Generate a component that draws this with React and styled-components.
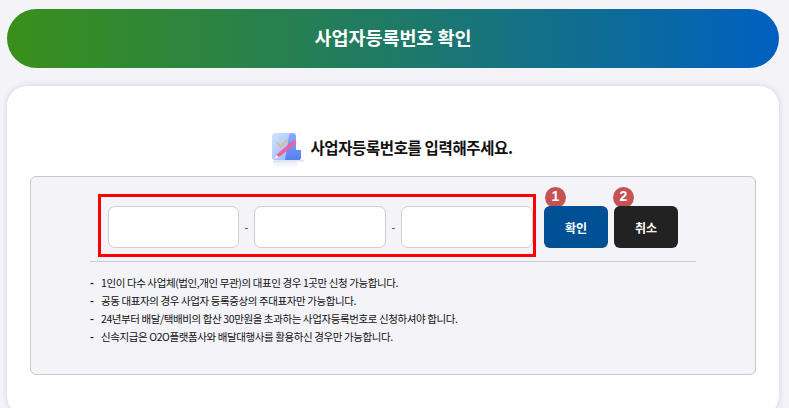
import styled, { createGlobalStyle } from "styled-components";

const GlobalStyle = createGlobalStyle`
  html, body {
    margin: 0;
    height: 100%;
    overflow: hidden;
    background: #f3f3f8;
  }
  * {
    box-sizing: border-box;
  }
`;

const Page = styled.div`
  width: 789px;
  height: 408px;
  overflow: hidden;
  padding: 9px 10px 0 7px;
  font-family: "Noto Sans CJK KR", "Noto Sans", sans-serif;
`;

const Header = styled.h1`
  margin: 0 0 18px;
  height: 59px;
  border-radius: 30px;
  background: linear-gradient(90deg, #3a8f1a 0%, #1f7a66 50%, #0060c0 100%);
  color: #fff;
  font-size: 18.5px;
  font-weight: 700;
  line-height: 57px;
  text-align: center;
  letter-spacing: -0.05px;
`;

const Card = styled.section`
  height: 330px;
  padding: 41px 23px 0;
  background: #fff;
  border-radius: 20px;
  box-shadow: 0 0 6px rgba(60, 60, 90, 0.18);
`;

const Title = styled.div`
  display: flex;
  align-items: flex-start;
  justify-content: center;
  gap: 3px;
  height: 49px;
  padding-right: 2px;
  color: #111;
  font-size: 15.5px;
  font-weight: 700;
  letter-spacing: -0.38px;
  line-height: 40px;
`;

const TitleIcon = styled.svg`
  display: block;
  margin-top: 5px;
  width: 36px;
  height: 39px;
`;

const Panel = styled.div`
  height: 199px;
  padding: 17px 59px 0;
  background: #f3f3f8;
  border: 1px solid #c9c9cd;
  border-radius: 6px;
`;

const FormRow = styled.div`
  display: flex;
  align-items: flex-end;
  margin-left: 8px;
`;

const Highlight = styled.div`
  display: flex;
  align-items: center;
  width: 438px;
  height: 63px;
  padding: 8px 0 6px 7px;
  border: 3px solid #f00;
`;

const NumberInput = styled.input`
  width: ${(p) => p.$width}px;
  height: 42px;
  padding: 0 10px;
  background: #fff;
  border: 1px solid #cfcfd3;
  border-radius: 7px;
  outline: none;
`;

const Dash = styled.span`
  flex: 1;
  color: #333;
  font-size: 11px;
  text-align: center;
`;

const ButtonWrap = styled.div`
  position: relative;
  margin: 0 0 9px ${(p) => p.$gap}px;
`;

const Button = styled.button`
  position: relative;
  display: block;
  width: 64px;
  height: 42px;
  padding: 0;
  color: #fff;
  font-family: inherit;
  font-size: 12px;
  font-weight: 700;
  background: ${(p) => p.$bg};
  border: 0;
  border-radius: 6px;
`;

const Badge = styled.span`
  position: absolute;
  top: -19px;
  left: ${(p) => p.$left}px;
  width: 21px;
  height: 21px;
  color: #fff;
  font-family: "Liberation Sans", sans-serif;
  font-size: 14px;
  font-weight: 700;
  line-height: 19px;
  text-align: center;
  background: #c65353;
  border-radius: 50%;
`;

const Divider = styled.hr`
  margin: 4px 0 0;
  width: 606px;
  height: 1px;
  background: #cbcbcf;
  border: 0;
`;

const Notes = styled.ul`
  margin: 12px 0 0;
  padding: 0;
  list-style: none;
`;

const Note = styled.li`
  display: flex;
  gap: 7px;
  color: #111;
  font-size: 10.5px;
  line-height: 18px;
  letter-spacing: -0.4px;
  white-space: nowrap;

  &::before {
    content: "-";
    width: 4px;
    font-weight: 700;
  }
`;

const PencilIcon = () => (
  <TitleIcon viewBox="0 0 36 39">
    <defs>
      <linearGradient id="sheet" x1="0" y1="0" x2="1" y2="1">
        <stop offset="0" stopColor="#d3e3ff" />
        <stop offset="1" stopColor="#93b4fb" />
      </linearGradient>
      <linearGradient id="back" x1="0" y1="0" x2="0" y2="1">
        <stop offset="0" stopColor="#8aaafb" />
        <stop offset="1" stopColor="#5680f0" />
      </linearGradient>
      <linearGradient id="fade" x1="0" y1="0" x2="0" y2="1">
        <stop offset="0" stopColor="#c8d4f8" stopOpacity="0.5" />
        <stop offset="1" stopColor="#ffffff" stopOpacity="0" />
      </linearGradient>
    </defs>
    <rect x="1" y="1" width="22" height="27" rx="3" fill="url(#sheet)" />
    <path d="M18 4c0-2 1.500-3 3.500-3S25 2 25 4v14h5v8c0 1-1 2-2 2H14z" fill="url(#back)" />
    <path d="M6 11l3.500 3.500L16 8" fill="none" stroke="#e2b877" strokeWidth="1.600" />
    <path d="M23 8l2.500 3L8 25l-4 2 1-4z" fill="#f0609a" />
    <path d="M8 25l-4 2 1-4z" fill="#fff" />
    <rect x="3" y="28" width="30" height="1.500" fill="#e4e4ea" />
    <rect x="2" y="29" width="24" height="10" fill="url(#fade)" />
  </TitleIcon>
);

export default function App() {
  return (
    <Page>
      <GlobalStyle />
      <Header>사업자등록번호 확인</Header>
      <Card>
        <Title>
          <PencilIcon />
          사업자등록번호를 입력해주세요.
        </Title>
        <Panel>
          <FormRow>
            <Highlight>
              <NumberInput $width={131} />
              <Dash>-</Dash>
              <NumberInput $width={132} />
              <Dash>-</Dash>
              <NumberInput $width={132} />
            </Highlight>
            <ButtonWrap $gap={8}>
              <Badge $left={1}>1</Badge>
              <Button $bg="#005096">확인</Button>
            </ButtonWrap>
            <ButtonWrap $gap={6}>
              <Badge $left={-1}>2</Badge>
              <Button $bg="#222">취소</Button>
            </ButtonWrap>
          </FormRow>
          <Divider />
          <Notes>
            <Note>1인이 다수 사업체(법인,개인 무관)의 대표인 경우 1곳만 신청 가능합니다.</Note>
            <Note>공동 대표자의 경우 사업자 등록증상의 주대표자만 가능합니다.</Note>
            <Note>24년부터 배달/택배비의 합산 30만원을 초과하는 사업자등록번호로 신청하셔야 합니다.</Note>
            <Note>신속지급은 O2O플랫폼사와 배달대행사를 활용하신 경우만 가능합니다.</Note>
          </Notes>
        </Panel>
      </Card>
    </Page>
  );
}
